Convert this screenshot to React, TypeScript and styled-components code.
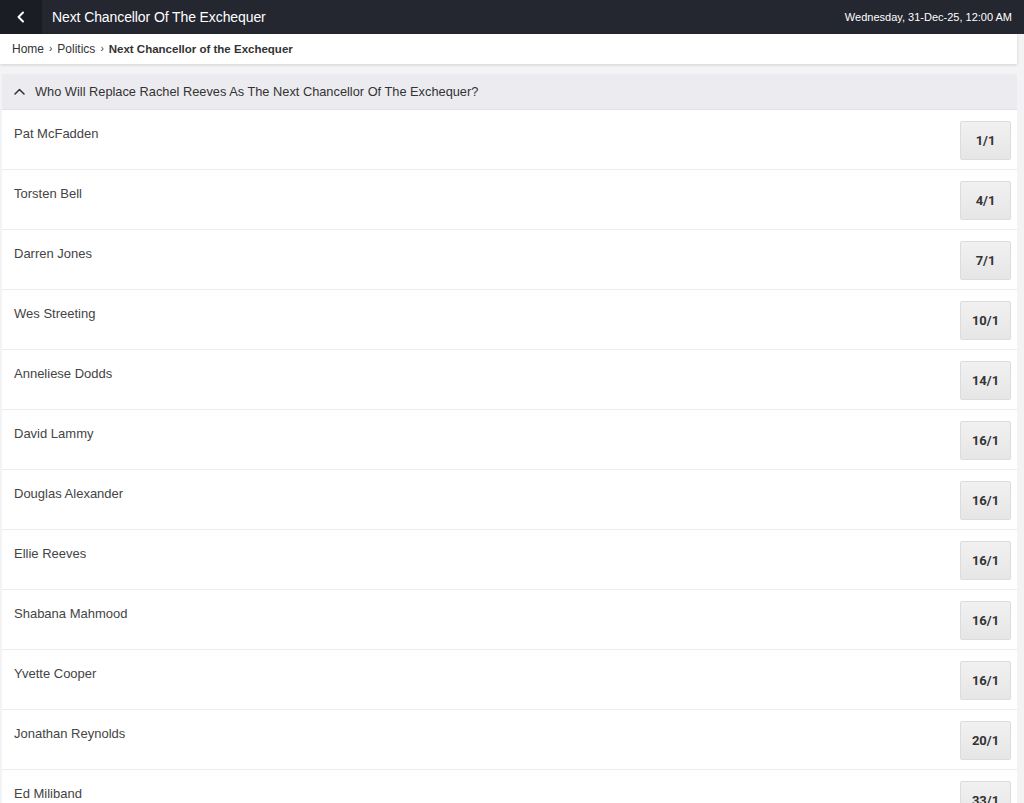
import { createGlobalStyle } from "styled-components";
import styled from "styled-components";

const GlobalStyle = createGlobalStyle`
  html, body {
    margin: 0;
    padding: 0;
    background: #f3f3f5;
    font-family: "Liberation Sans", Arial, sans-serif;
    color: #333;
  }
`;

const runners: { name: string; odds: string }[] = [
  { name: "Pat McFadden", odds: "1/1" },
  { name: "Torsten Bell", odds: "4/1" },
  { name: "Darren Jones", odds: "7/1" },
  { name: "Wes Streeting", odds: "10/1" },
  { name: "Anneliese Dodds", odds: "14/1" },
  { name: "David Lammy", odds: "16/1" },
  { name: "Douglas Alexander", odds: "16/1" },
  { name: "Ellie Reeves", odds: "16/1" },
  { name: "Shabana Mahmood", odds: "16/1" },
  { name: "Yvette Cooper", odds: "16/1" },
  { name: "Jonathan Reynolds", odds: "20/1" },
  { name: "Ed Miliband", odds: "33/1" },
  { name: "Bridget Phillipson", odds: "33/1" },
];

const Page = styled.div`
  height: 803px;
  overflow: hidden;
`;

const TopBar = styled.header`
  display: flex;
  align-items: center;
  height: 34px;
  background: #242630;
  color: #fff;
`;

const BackButton = styled.div`
  display: flex;
  align-items: center;
  justify-content: center;
  width: 42px;
  height: 100%;
  background: #1b1d24;
`;

const Title = styled.h1`
  flex: 1;
  margin: 0 0 0 10px;
  font-size: 14px;
  font-weight: 400;
  letter-spacing: -0.1px;
`;

const DateText = styled.span`
  font-size: 11px;
  margin-right: 12px;
`;

const Body = styled.div`
  padding-right: 7px;
`;

const Breadcrumb = styled.nav`
  display: flex;
  align-items: center;
  height: 30px;
  padding-left: 12px;
  background: #fff;
  font-size: 12px;
  line-height: 14px;
  color: #333;
  box-shadow: 0 1px 3px rgba(0, 0, 0, 0.14);
`;

const Sep = styled.span`
  margin: 0 5px;
  font-size: 10px;
`;

const Current = styled.span`
  font-weight: 700;
  font-size: 11.5px;
`;

const Market = styled.section`
  margin: 10px 0 0 2px;
`;

const MarketHeader = styled.div`
  display: flex;
  align-items: center;
  height: 35px;
  padding-left: 12px;
  background: #ececf0;
  border-bottom: 1px solid #e2e2e6;
  font-size: 12.8px;
  color: #333;
`;

const Chevron = styled.svg`
  margin-right: 10px;
`;

const Row = styled.div`
  display: flex;
  justify-content: space-between;
  height: 59px;
  background: #fff;
  border-bottom: 1px solid #ececee;
`;

const Name = styled.div`
  padding: 16px 0 0 12px;
  font-size: 13px;
  color: #444;
`;

const OddsButton = styled.button`
  align-self: center;
  width: 51px;
  height: 39px;
  margin-right: 6px;
  margin-top: 1px;
  padding: 0;
  background: linear-gradient(#f1f1f1, #e6e6e6);
  border: 1px solid #dcdcdc;
  border-radius: 2px;
  font-family: Roboto, "Liberation Sans", sans-serif;
  font-weight: 700;
  font-size: 13px;
  color: #333;
`;

export default function App() {
  return (
    <Page>
      <GlobalStyle />
      <TopBar>
        <BackButton>
          <svg width="10" height="12" viewBox="0 0 10 12" fill="none">
            <path d="M7 1.5L2.5 6L7 10.5" stroke="#fff" strokeWidth="2" strokeLinecap="round" strokeLinejoin="round" />
          </svg>
        </BackButton>
        <Title>Next Chancellor Of The Exchequer</Title>
        <DateText>Wednesday, 31-Dec-25, 12:00 AM</DateText>
      </TopBar>
      <Body>
        <Breadcrumb>
          <span>Home</span>
          <Sep>›</Sep>
          <span>Politics</span>
          <Sep>›</Sep>
          <Current>Next Chancellor of the Exchequer</Current>
        </Breadcrumb>
        <Market>
          <MarketHeader>
            <Chevron width="11" height="7" viewBox="0 0 11 7" fill="none">
              <path d="M1 6L5.5 1.5L10 6" stroke="#333" strokeWidth="1.5" strokeLinecap="round" strokeLinejoin="round" />
            </Chevron>
            Who Will Replace Rachel Reeves As The Next Chancellor Of The Exchequer?
          </MarketHeader>
          {runners.map((r) => (
            <Row key={r.name}>
              <Name>{r.name}</Name>
              <OddsButton>{r.odds}</OddsButton>
            </Row>
          ))}
        </Market>
      </Body>
    </Page>
  );
}
